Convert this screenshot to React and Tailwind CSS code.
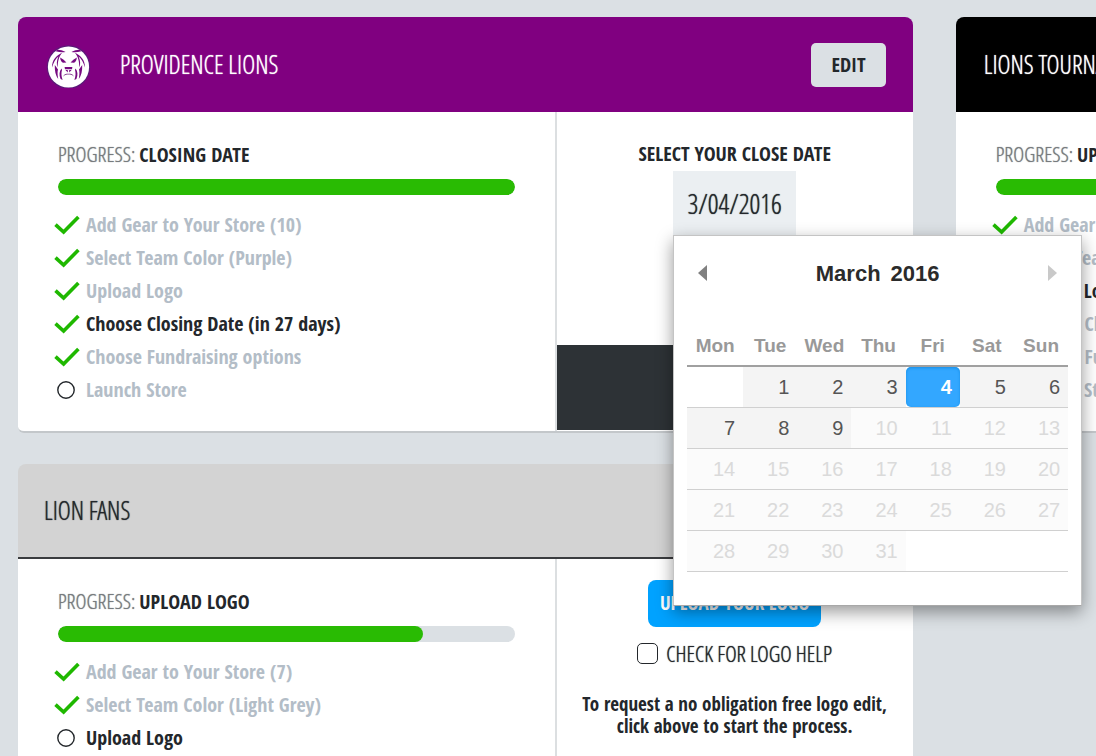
const LIGHT = 'font-["Open_Sans_Condensed_Light","Open_Sans_Condensed","Roboto_Condensed",sans-serif] font-light';
const BOOK = `${LIGHT} [text-shadow:0_0_1px_currentColor]`;

const stepLabels = (gear, color, days) => [
  `Add Gear to Your Store (${gear})`,
  `Select Team Color (${color})`,
  'Upload Logo',
  days ? `Choose Closing Date (in ${days} days)` : 'Choose Closing Date',
  'Choose Fundraising options',
  'Launch Store',
];

function Check() {
  return (
    <svg viewBox="0 0 26 20" className="h-5 w-[26px] shrink-0" fill="none" stroke="#1fb800" strokeWidth="3.6" aria-hidden="true">
      <path d="M1.5 9.6 L9.6 17 L24.4 2" />
    </svg>
  );
}

function Circle() {
  return (
    <svg viewBox="0 0 26 20" className="h-5 w-[26px] shrink-0" fill="none" stroke="#23272b" strokeWidth="1.4" aria-hidden="true">
      <circle cx="12" cy="10" r="8.2" />
    </svg>
  );
}

function LionLogo() {
  return (
    <svg viewBox="0 0 46 46" className="h-[46px] w-[46px] shrink-0" role="img" aria-label="Lion logo">
      <circle cx="22.5" cy="25" r="21.8" fill="#5b1a78" />
      <circle cx="22.5" cy="25" r="20.6" fill="#fff" />
      <g fill="#760a80" transform="translate(0 1)">
        <path d="M11.5 6.6 C14.5 7.2 16.5 7.4 19.6 9 C16.6 9.6 13.4 9.4 9.6 8.2 Z" />
        <path d="M33.5 6.6 C30.5 7.2 28.5 7.4 25.4 9 C28.4 9.6 31.6 9.4 35.4 8.2 Z" />
        <path d="M16.4 9.4 C10.4 12.2 6 16.6 6 24.4 C7.6 19.4 9.4 16 12.4 13.4 C10.6 17.6 10.4 21 11.6 24.6 C11.8 18.6 12.6 13.6 16.4 9.4 Z" />
        <path d="M28.6 9.4 C34.6 12.2 39 16.6 39 24.4 C37.4 19.4 35.6 16 32.6 13.4 C34.4 17.6 34.6 21 33.4 24.6 C33.2 18.6 32.4 13.6 28.6 9.4 Z" />
        <path d="M8.8 22 C8.6 28 9.6 32.4 12.2 36 C11.4 31 11.4 28.4 12 26.4 Z" />
        <path d="M36.2 22 C36.4 28 35.4 32.4 32.8 36 C33.6 31 33.6 28.4 33 26.4 Z" />
        <path d="M15.4 25.6 C13.4 28.4 12.8 32 14.6 36 L16.6 37 C15.2 33 15.2 29.6 16 27 Z" />
        <path d="M29.6 25.6 C31.6 28.4 32.2 32 30.4 36 L28.4 37 C29.8 33 29.8 29.6 29 27 Z" />
        <path d="M14.2 14.6 C16 15.6 18.6 17.4 20.4 19.6 L17 19.8 C15.2 19 14.4 17.4 14.2 14.6 Z" />
        <path d="M30.8 14.6 C29 15.6 26.4 17.4 24.6 19.6 L28 19.8 C29.8 19 30.6 17.4 30.8 14.6 Z" />
        <path d="M18.6 24 H26.4 L26 26.2 H19 Z" />
        <path d="M19.4 27 H21.8 V29.4 Z M25.6 27 H23.2 V29.4 Z" />
      </g>
      <path d="M17.6 33.8 C19 32.2 21 32 22.5 32.2 C24 32 26 32.2 27.4 33.8" fill="none" stroke="#8d4598" strokeWidth="1" />
    </svg>
  );
}

function Card({ title, logo, headerClass, progressLabel, progress, steps, done, current, action, children }) {
  return (
    <article className="flex flex-col rounded-t-lg">
      <header className={`flex h-[95px] items-center rounded-t-lg ${headerClass}`}>
        {logo && <div className="mr-7">{logo}</div>}
        <h2 className={`grow pb-[2px] text-[25px] leading-8 ${BOOK}`}>{title}</h2>
        {action}
      </header>
      <div className="flex min-h-[321px] grow rounded-bl-md border-b-2 border-[#c3c7ca] bg-white">
        <section className="w-[60.2%] border-r-2 border-[#dcdfe1] px-10 pt-7">
          <h3 className="text-xl leading-7">
            <span className={`text-[21px] leading-7 text-[#777b7e] ${BOOK}`}>PROGRESS: </span>
            <b>{progressLabel}</b>
          </h3>
          <div className="mt-[10px] h-4 overflow-hidden rounded-full bg-[#dbe0e4]" role="progressbar" aria-label={`${title} progress`} aria-valuenow={progress} aria-valuemin={0} aria-valuemax={100}>
            <div className="h-full rounded-full bg-[#29bb03]" style={{ width: `${progress}%` }} />
          </div>
          <ol className="-ml-1 mt-[13px] pb-6">
            {steps.map((label, i) => (
              <li key={label} className={`flex h-[33px] items-center gap-[6px] whitespace-nowrap text-xl font-bold ${i === current ? 'text-[#23272b]' : 'text-[#b3bdc7]'}`}>
                {i < done ? <Check /> : <Circle />}
                {label}
              </li>
            ))}
          </ol>
        </section>
        <section className="flex grow basis-0 flex-col items-center">{children}</section>
      </div>
    </article>
  );
}

const weekDays = ['Mon', 'Tue', 'Wed', 'Thu', 'Fri', 'Sat', 'Sun'];
const weeks = Array.from({ length: 5 }, (_, w) =>
  Array.from({ length: 7 }, (_, d) => {
    const day = w * 7 + d;
    return day >= 1 && day <= 31 ? day : null;
  })
);

function dayClass(day) {
  if (day === 4) return 'rounded-[5px] bg-[#33a7ff] font-bold text-white shadow-[inset_0_1px_3px_#178fe5]';
  if (day <= 9) return 'bg-[#f4f4f4] text-[#555]';
  return 'bg-[#fbfbfb] text-[#dadada]';
}

function Calendar() {
  return (
    <div className="absolute left-0 top-full z-10 h-[371px] w-[409px] border border-[#c4c4c4] border-b-[#a8a8a8] bg-white px-[13px] font-['Liberation_Sans',Arial,sans-serif] text-[#2b2b2b] shadow-[0_6px_16px_rgba(0,0,0,0.4)]">
      <div className="flex h-[74px] items-center justify-between px-[11px]">
        <button type="button" aria-label="Previous month">
          <svg viewBox="0 0 9 16" className="h-4 w-[9px]" fill="#808080"><path d="M9 0 V16 L0 8 Z" /></svg>
        </button>
        <div className="flex gap-[10px] text-[22px] font-bold">
          <span>March</span>
          <span>2016</span>
        </div>
        <button type="button" aria-label="Next month" disabled>
          <svg viewBox="0 0 9 16" className="h-4 w-[9px]" fill="#c9c9c9"><path d="M0 0 V16 L9 8 Z" /></svg>
        </button>
      </div>
      <table className="mt-4 w-full table-fixed border-collapse">
        <thead>
          <tr className="h-10 border-b-2 border-[#a0a0a0] text-[19px] text-[#999]">
            {weekDays.map((d) => <th key={d} scope="col" className="p-0 pt-[2px] first:w-14">{d}</th>)}
          </tr>
        </thead>
        <tbody>
          {weeks.map((week, w) => (
            <tr key={w} className="border-b border-[#d0d0d0]">
              {week.map((day, d) => (
                <td key={d} className="p-0">
                  {day && (
                    <button type="button" disabled={day > 9} className={`block h-10 w-full pr-2 text-right text-xl ${dayClass(day)}`}>{day}</button>
                  )}
                </td>
              ))}
            </tr>
          ))}
        </tbody>
      </table>
    </div>
  );
}

export default function App() {
  return (
    <main className="min-h-screen overflow-hidden bg-[#dbe0e4] pl-[18px] pt-[17px] font-['Open_Sans_Condensed','Roboto_Condensed',sans-serif] text-[#23272b]">
      <div className="grid grid-cols-[83%_83%] gap-x-[43px] gap-y-[31px]">
        <Card
          title="PROVIDENCE LIONS"
          logo={<LionLogo />}
          headerClass="bg-[#800080] pl-7 pr-[27px] text-white"
          progressLabel="CLOSING DATE"
          progress={100}
          steps={stepLabels(10, 'Purple', 27)}
          done={5}
          current={3}
          action={<button type="button" className="h-11 rounded-[5px] bg-[#dbe0e4] px-5 text-xl font-bold text-[#23272b]">EDIT</button>}
        >
          <label htmlFor="close-date" className="pt-7 text-xl font-bold leading-7">SELECT YOUR CLOSE DATE</label>
          <div className="relative mt-[3px]">
            <input id="close-date" type="text" defaultValue="3/04/2016" className={`block h-16 w-[123px] bg-[#ebeff2] text-center text-[27px] ${BOOK}`} />
            <Calendar />
          </div>
          <div className="mb-px mt-auto h-[85px] w-full bg-[#2d3236]" />
        </Card>
        <Card
          title="LIONS TOURNAMENT"
          headerClass="bg-black px-7 text-white"
          progressLabel="UPLOAD LOGO"
          progress={80}
          steps={stepLabels(10, 'Black', null)}
          done={2}
          current={2}
        />
        <Card
          title="LION FANS"
          headerClass="border-b-2 border-[#3a3c3f] bg-[#d3d3d3] px-[26px]"
          progressLabel="UPLOAD LOGO"
          progress={80}
          steps={stepLabels(7, 'Light Grey', null)}
          done={2}
          current={2}
        >
          <button type="button" className="mt-[21px] h-[47px] rounded-lg bg-[#00a2ff] px-3 text-[19px] font-bold text-white">UPLOAD YOUR LOGO</button>
          <label className={`mt-3 flex items-center gap-2 text-[22px] leading-7 ${BOOK}`}>
            <input type="checkbox" className="h-[21px] w-[21px] appearance-none rounded-[5px] border border-[#23272b] bg-white" />
            CHECK FOR LOGO HELP
          </label>
          <p className="mt-[26px] px-5 text-center text-[19px] font-bold leading-[22px]">To request a no obligation free logo edit, click above to start the process.</p>
        </Card>
      </div>
    </main>
  );
}
